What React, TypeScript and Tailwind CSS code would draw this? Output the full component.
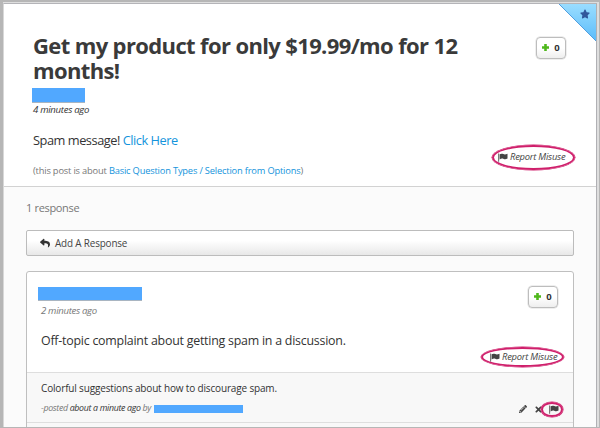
import type { ReactNode } from "react";
import { FaPencilAlt, FaReply, FaStar, FaTimes } from "react-icons/fa";

function Flag() {
  return (
    <svg className="h-[9px] w-[10px] shrink-0" viewBox="0 0 10 9" fill="#444">
      <path d="M0.3 0.5H1.1V8.8H0.3Z" />
      <path d="M1.6 1.3C3.1 0.4 4.1 0.6 5.3 1.1C6.7 1.7 7.8 1.4 9.5 0.7V5.6C8.1 6.4 7 6.6 5.7 6C4.3 5.4 3.2 5.5 1.6 6.4Z" />
    </svg>
  );
}

function VoteButton() {
  return (
    <button className="flex h-[22px] w-[30px] items-center justify-center gap-[5px] rounded-[4px] border border-[#bdbdbd] bg-linear-to-b from-white from-50% to-[#eeeeee] text-[9.5px] font-bold text-[#333] shadow-[0_0_0_0.5px_#dddddd]">
      <svg className="-mt-px size-[7px]" viewBox="0 0 7 7">
        <path d="M2.2 0H4.8V2.2H7V4.8H4.8V7H2.2V4.8H0V2.2H2.2Z" fill="#4fb81c" />
      </svg>
      <span>0</span>
    </button>
  );
}

function Ring({ className }: { className: string }) {
  return (
    <span
      className={`pointer-events-none absolute rounded-[50%] border-2 border-[#cf1f6b] shadow-[0_0_0_0.5px_#cf1f6b] ${className}`}
    />
  );
}

function ReportMisuse({ children }: { children: ReactNode }) {
  return (
    <a className="relative flex h-[14px] items-center gap-[2px] text-[9.4px] tracking-[-0.23px] italic whitespace-nowrap text-[#444]">
      <Flag />
      <span className="w-[56px]">Report Misuse</span>
      {children}
    </a>
  );
}

export default function App() {
  return (
    <div className="h-[428px] w-[600px] overflow-hidden border-t-2 border-r border-b border-l-[3px] border-[#b6b6b6] bg-[#dedede] pt-px pr-[2px] font-['Open_Sans','Noto_Sans',sans-serif]">
      <main className="relative h-full overflow-hidden border-t border-r border-l border-t-[#b4b4b8] border-r-[#b0b0b4] border-l-[#d8d8d8] bg-[#fbfbfb]">
        <svg className="absolute top-0 right-0 h-[37px] w-[37px]" viewBox="0 0 37 37">
          <defs>
            <linearGradient id="corner" x1="0" y1="0" x2="0" y2="1">
              <stop offset="0" stopColor="#9addff" />
              <stop offset="1" stopColor="#5bbcfa" />
            </linearGradient>
          </defs>
          <path d="M0 0H37V37Z" fill="url(#corner)" />
          <path d="M0 0L37 37" stroke="#519fe0" />
        </svg>
        <FaStar className="absolute top-[5px] right-[6px] size-[10px] text-[#31569b]" />

        <header className="flex h-[183px] justify-between border-b border-[#d2d2d2] bg-white pt-[30px] pr-[21px] pl-[29px]">
          <div className="w-[450px]">
            <h1 className="-mt-px text-[22px] leading-[24.5px] font-bold tracking-[-0.63px] whitespace-nowrap text-[#3a3a3a]">
              Get my product for only $19.99/mo for 12
              <br />
              months!
            </h1>
            <div className="mt-[6px] -ml-px h-[15px] w-[53px] border-b border-[#a9b5c1] bg-[#51a8ff]" />
            <p className="h-[12px] text-[9.6px] leading-[13px] tracking-[-0.3px] text-[#333] italic">4 minutes ago</p>
            <p className="mt-[15px] text-[12.8px] leading-[20px] tracking-[-0.47px] text-[#333]">
              Spam message! <a className="text-[#1494dc]">Click Here</a>
            </p>
            <p className="mt-[14px] text-[9.3px] leading-[14px] tracking-[-0.18px] whitespace-nowrap text-[#777]">
              (this post is about <a className="text-[#1494dc]">Basic Question Types / Selection from Options</a>)
            </p>
          </div>
          <div className="flex flex-col items-end pt-[3px]">
            <div className="pr-[9px]">
              <VoteButton />
            </div>
            <div className="mt-[91px] pr-[9px]">
              <ReportMisuse>
                <Ring className="-top-[5px] -left-[6px] h-[25px] w-[83px]" />
              </ReportMisuse>
            </div>
          </div>
        </header>

        <section className="px-[22px] pt-[13px]">
          <p className="text-[11px] leading-[16px] tracking-[-0.33px] text-[#777]">1 response</p>
          <button className="mt-[14px] flex h-[26px] w-full items-center gap-[5px] rounded-[2px] border border-[#bcbcbc] bg-linear-to-b from-white from-40% to-[#e8e8e8] pl-[13px] text-[9.9px] tracking-[-0.15px] text-[#444]">
            <FaReply className="size-[10px] text-[#333]" />
            <span>Add A Response</span>
          </button>

          <article className="mt-[15px] h-[170px] rounded-t-[3px] border border-[#bfbfbf] bg-white">
            <div className="flex h-[101px] justify-between border-b border-[#dedede]">
              <div className="pt-[15px] pl-[14px]">
                <div className="-ml-[3px] h-[14px] w-[104px] border-b border-[#a9b5c1] bg-[#51a8ff]" />
                <p className="mt-[3px] text-[9.6px] leading-[13px] tracking-[-0.33px] text-[#777] italic">2 minutes ago</p>
                <p className="mt-[14px] text-[12.4px] leading-[20px] tracking-[-0.23px] whitespace-nowrap text-[#333]">
                  Off-topic complaint about getting spam in a discussion.
                </p>
              </div>
              <div className="flex flex-col items-end pt-[14px] pr-[15px]">
                <VoteButton />
                <div className="mt-[42px]">
                  <ReportMisuse>
                    <Ring className="-top-[3px] -left-[9px] h-[20px] w-[83px]" />
                  </ReportMisuse>
                </div>
              </div>
            </div>
            <div className="h-[50px] border-b border-[#dedede] bg-[#f8f8f8] pt-[8px] pr-[14px] pl-[14px]">
              <p className="text-[10px] leading-[14px] tracking-[-0.16px] text-[#333]">
                Colorful suggestions about how to discourage spam.
              </p>
              <div className="mt-[7px] flex h-[14px] items-center text-[8.8px] tracking-[-0.32px] whitespace-nowrap text-[#777] italic">
                <p>
                  -posted <span className="text-[#333]">about a minute ago</span> by
                </p>
                <span className="ml-[3px] h-[8px] w-[89px] bg-[#51a8ff]" />
                <div className="ml-auto flex items-center text-[#444]">
                  <FaPencilAlt className="size-[8px]" />
                  <FaTimes className="ml-[7px] size-[9px]" />
                  <span className="relative ml-[6px]">
                    <Flag />
                    <Ring className="-top-[3px] -left-[8px] h-[15px] w-[22px]" />
                  </span>
                </div>
              </div>
            </div>
            <div className="h-[20px] bg-[#f8f8f8]" />
          </article>
        </section>
      </main>
    </div>
  );
}
